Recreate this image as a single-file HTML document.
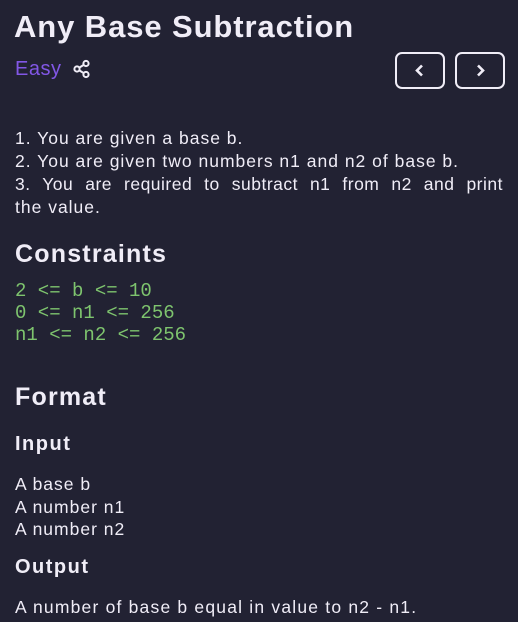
<!DOCTYPE html>
<html><head><style>
body{margin:0;background:#222233;width:518px;height:622px;overflow:hidden;font-family:"Liberation Sans",sans-serif;color:#f0edf7;position:relative}
.a{position:absolute;left:15px;white-space:nowrap}
h1{position:absolute;left:14px;top:9px;margin:0;font-size:31px;font-weight:bold;letter-spacing:0.9px}
.easy{position:absolute;left:15px;top:58px;font-size:20px;color:#8257e6;letter-spacing:0.5px}
.btn{position:absolute;top:52px;width:46px;height:33px;border:2px solid #f0edf7;border-radius:7px}
.p{font-size:17.5px;line-height:23px;letter-spacing:1px}
.mono{font-family:"Liberation Mono",monospace;color:#7ec46e;font-size:19px;line-height:22px}
h2{position:absolute;left:15px;margin:0;font-weight:bold}
</style></head><body>
<h1>Any Base Subtraction</h1>
<div class="easy">Easy</div>
<svg style="position:absolute;left:73px;top:59px" width="18" height="20" viewBox="0 0 18 20" fill="none" stroke="#f0edf7" stroke-width="2"><circle cx="4" cy="10" r="2.6"/><circle cx="13" cy="4.5" r="2.6"/><circle cx="13" cy="15.5" r="2.6"/><path d="M6.3 8.6 10.7 5.9M6.3 11.4 10.7 14.1"/></svg>
<div class="btn" style="left:395px"><svg width="46" height="33" viewBox="0 0 46 33"><path d="M25 11.5 20 16.5 25 21.5" fill="none" stroke="#f0edf7" stroke-width="2.6"/></svg></div>
<div class="btn" style="left:455px"><svg width="46" height="33" viewBox="0 0 46 33"><path d="M21 11.5 26 16.5 21 21.5" fill="none" stroke="#f0edf7" stroke-width="2.6"/></svg></div>
<div class="a p" style="top:127px">1. You are given a base b.<br>2. You are given two numbers n1 and n2 of base b.</div>
<div class="a p" style="top:173px;width:488px;white-space:normal;text-align:justify;text-align-last:justify;letter-spacing:0.5px">3. You are required to subtract n1 from n2 and print</div>
<div class="a p" style="top:196px">the value.</div>
<h2 style="top:240px;font-size:25px;letter-spacing:1.2px">Constraints</h2>
<div class="a mono" style="top:280px">2 &lt;= b &lt;= 10<br>0 &lt;= n1 &lt;= 256<br>n1 &lt;= n2 &lt;= 256</div>
<h2 style="top:383px;font-size:25px;letter-spacing:1.2px">Format</h2>
<h2 style="top:433px;font-size:20px;letter-spacing:1.5px">Input</h2>
<div class="a p" style="top:473px;line-height:22.5px">A base b<br>A number n1<br>A number n2</div>
<h2 style="top:556px;font-size:20px;letter-spacing:1.5px">Output</h2>
<div class="a p" style="top:596px;letter-spacing:1.2px">A number of base b equal in value to n2 - n1.</div>
</body></html>
